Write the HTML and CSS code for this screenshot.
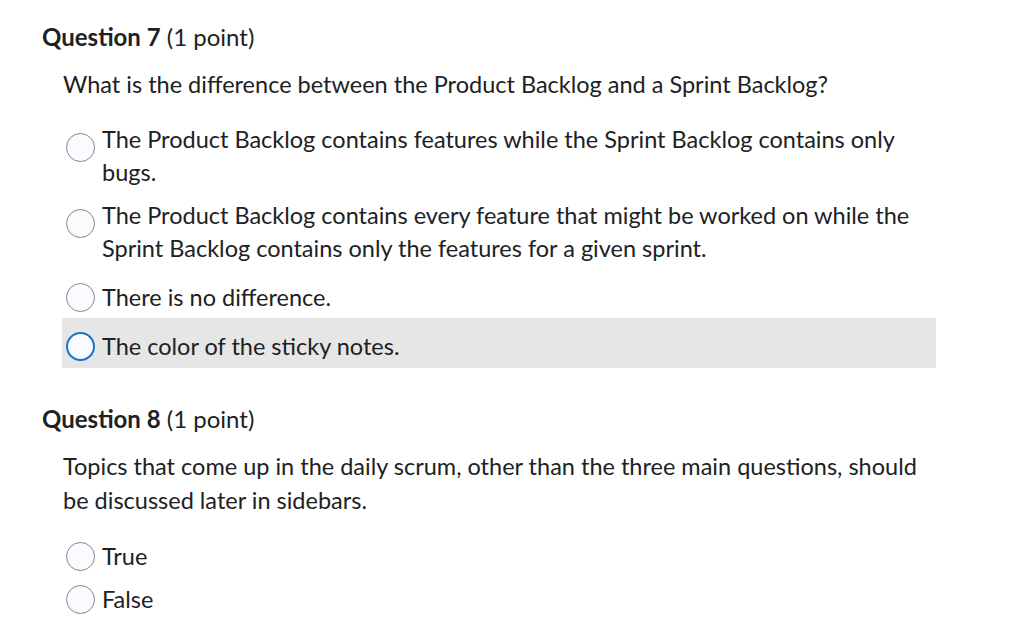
FILE: index.html
```html
<!DOCTYPE html>
<html>
<head>
<meta charset="utf-8">
<link rel="stylesheet" href="styles.css">
</head>
<body>
<div class="page">
  <section class="question q7">
    <h2 class="q-title"><span class="q-num">Question 7</span> (1 point)</h2>
    <p class="q-text">What is the difference between the Product Backlog and a Sprint Backlog?</p>
    <div class="options">
      <label class="option multi first"><span class="radio"></span><span class="opt-text">The Product Backlog contains features while the Sprint Backlog contains only bugs.</span></label>
      <label class="option multi"><span class="radio"></span><span class="opt-text">The Product Backlog contains every feature that might be worked on while the Sprint Backlog contains only the features for a given sprint.</span></label>
      <label class="option"><span class="radio"></span><span class="opt-text">There is no difference.</span></label>
      <label class="option hover"><span class="radio focus"></span><span class="opt-text">The color of the sticky notes.</span></label>
    </div>
  </section>
  <section class="question q8">
    <h2 class="q-title"><span class="q-num">Question 8</span> (1 point)</h2>
    <p class="q-text">Topics that come up in the daily scrum, other than the three main questions, should be discussed later in sidebars.</p>
    <div class="options tf">
      <label class="option"><span class="radio"></span><span class="opt-text">True</span></label>
      <label class="option"><span class="radio"></span><span class="opt-text">False</span></label>
    </div>
  </section>
</div>
</body>
</html>
```

FILE: styles.css
```css
html, body {
  margin: 0;
  padding: 0;
  background: #ffffff;
}
body {
  font-family: Lato, "Open Sans", sans-serif;
  color: #202122;
}
.page {
  padding: 22px 0 0 42px;
  width: 894px;
}
.question {
  display: flex;
  flex-direction: column;
}
.q-title {
  margin: 0;
  font-size: 24px;
  line-height: 30px;
  font-weight: 400;
}
.q-num {
  font-weight: 700;
}
.q-text {
  margin: 15px 0 0 21px;
  font-size: 23.5px;
  line-height: 34px;
  width: 873px;
}
.options {
  margin: 14px 0 0 20px;
  display: flex;
  flex-direction: column;
}
.option {
  display: flex;
  align-items: flex-start;
  padding: 8px 0;
  font-size: 23.5px;
  line-height: 33px;
}
.option.first {
  padding-bottom: 2px;
}
.option.hover {
  background: #e6e6e6;
  margin-top: -4px;
  padding: 12px 0 5px;
}
.radio {
  flex: none;
  box-sizing: border-box;
  width: 29px;
  height: 29px;
  margin: 2px 7px 0 4px;
  border-radius: 50%;
  border: 1px solid #868686;
  background: #f9fbff;
}
.multi .radio {
  margin-top: 10px;
}
.radio.focus {
  border: 2.5px solid #1a73c8;
}
.opt-text {
  flex: 1;
}
.q8 {
  margin-top: 36px;
}
.q8 .q-text {
  margin-top: 15px;
}
.tf {
  margin-top: 18px;
}
.tf .option {
  padding: 5px 0;
}
```
